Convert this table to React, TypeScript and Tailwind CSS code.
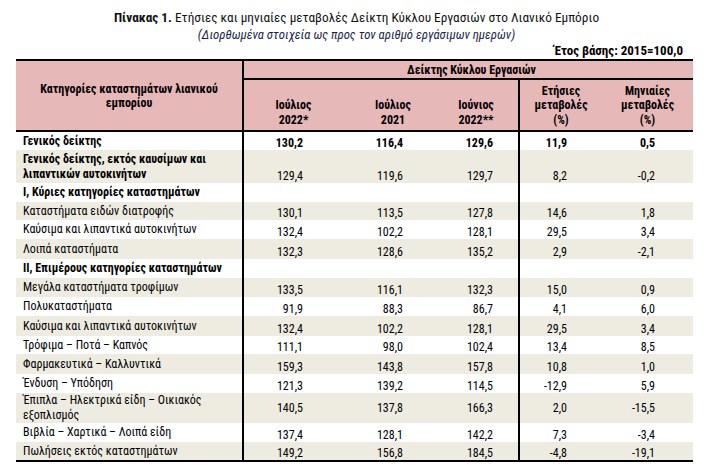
type Row = {
  label: string[];
  nums?: string[];
  bold?: boolean;
  boldNums?: boolean;
  h: string;
  mid?: boolean;
};

const rows: Row[] = [
  { label: ['Γενικός δείκτης'], nums: ['130,2', '116,4', '129,6', '11,9', '0,5'], bold: true, boldNums: true, h: 'h-[18px]' },
  { label: ['Γενικός δείκτης, εκτός καυσίμων και', 'λιπαντικών αυτοκινήτων'], nums: ['129,4', '119,6', '129,7', '8,2', '-0,2'], bold: true, h: 'h-[33px]' },
  { label: ['I, Κύριες κατηγορίες καταστημάτων'], bold: true, h: 'h-[19px]' },
  { label: ['Καταστήματα ειδών διατροφής'], nums: ['130,1', '113,5', '127,8', '14,6', '1,8'], h: 'h-[18px]' },
  { label: ['Καύσιμα και λιπαντικά αυτοκινήτων'], nums: ['132,4', '102,2', '128,1', '29,5', '3,4'], h: 'h-[19px]' },
  { label: ['Λοιπά καταστήματα'], nums: ['132,3', '128,6', '135,2', '2,9', '-2,1'], h: 'h-[20px]' },
  { label: ['II, Επιμέρους κατηγορίες καταστημάτων'], bold: true, h: 'h-[19px]' },
  { label: ['Μεγάλα καταστήματα τροφίμων'], nums: ['133,5', '116,1', '132,3', '15,0', '0,9'], h: 'h-[19px]' },
  { label: ['Πολυκαταστήματα'], nums: ['91,9', '88,3', '86,7', '4,1', '6,0'], h: 'h-[19px]' },
  { label: ['Καύσιμα και λιπαντικά αυτοκινήτων'], nums: ['132,4', '102,2', '128,1', '29,5', '3,4'], h: 'h-[20px]' },
  { label: ['Τρόφιμα – Ποτά – Καπνός'], nums: ['111,1', '98,0', '102,4', '13,4', '8,5'], h: 'h-[18px]' },
  { label: ['Φαρμακευτικά – Καλλυντικά'], nums: ['159,3', '143,8', '157,8', '10,8', '1,0'], h: 'h-[20px]' },
  { label: ['Ένδυση – Υπόδηση'], nums: ['121,3', '139,2', '114,5', '-12,9', '5,9'], h: 'h-[19px]' },
  { label: ['Έπιπλα – Ηλεκτρικά είδη – Οικιακός', 'εξοπλισμός'], nums: ['140,5', '137,8', '166,3', '2,0', '-15,5'], h: 'h-[30px]', mid: true },
  { label: ['Βιβλία – Χαρτικά – Λοιπά είδη'], nums: ['137,4', '128,1', '142,2', '7,3', '-3,4'], h: 'h-[19px]' },
  { label: ['Πωλήσεις εκτός καταστημάτων'], nums: ['149,2', '156,8', '184,5', '-4,8', '-19,1'], h: 'h-[18px]' },
];

function DataRow({ row, shaded }: { row: Row; shaded: boolean }) {
  const n = row.nums ?? ['', '', '', '', ''];
  const align = row.mid ? 'items-center' : 'items-end';
  const numCls = `flex ${align} justify-end leading-[14px] ${row.boldNums ? 'font-bold' : ''}`;
  return (
    <div className={`flex ${row.h} ${shaded ? 'bg-[#eeece1]' : 'bg-white'}`}>
      <div className={`w-[228px] shrink-0 border-r-2 border-black pl-[7px] flex flex-col justify-center leading-[15px] ${row.bold ? 'font-bold' : ''}`}>
        {row.label.map((l) => (
          <span key={l} className="whitespace-nowrap">{l}</span>
        ))}
      </div>
      <div className="w-[276px] shrink-0 border-r-2 border-black flex">
        <div className={`w-[59px] ${numCls}`}>{n[0]}</div>
        <div className={`w-[100px] ${numCls}`}>{n[1]}</div>
        <div className={`w-[90px] ${numCls}`}>{n[2]}</div>
      </div>
      <div className="flex-1 flex">
        <div className={`w-[47px] ${numCls}`}>{n[3]}</div>
        <div className={`w-[88px] ${numCls}`}>{n[4]}</div>
      </div>
    </div>
  );
}

export default function App() {
  return (
    <div
      className="w-[713px] h-[472px] bg-white text-black text-[12px]"
      style={{ fontFamily: '"Roboto Condensed", Roboto, sans-serif' }}
    >
      <div className="pt-[9px] flex flex-col items-center">
        <div className="text-[13.3px] leading-[18px] text-[#111]">
          <span className="font-bold">Πίνακας 1.</span> Ετήσιες και μηνιαίες μεταβολές Δείκτη Κύκλου Εργασιών στο Λιανικό Εμπόριο
        </div>
        <div className="italic text-[12.8px] leading-[15px] text-[#1b1f4a]">
          (Διορθωμένα στοιχεία ως προς τον αριθμό εργάσιμων ημερών)
        </div>
      </div>
      <div className="w-[693px] flex justify-end pr-[10px] font-bold text-[13px] leading-[16px] mt-[1px]">
        Έτος βάσης: 2015=100,0
      </div>

      <div className="ml-[16px] w-[677px]">
        {/* header */}
        <div className="flex bg-[#e6b8b7] border-t-2 border-b-2 border-black font-bold h-[73px]">
          <div className="w-[228px] shrink-0 border-r-2 border-black flex flex-col items-center justify-center leading-[14px]">
            <span>Κατηγορίες καταστημάτων λιανικού</span>
            <span>εμπορίου</span>
          </div>
          <div className="flex-1 flex flex-col">
            <div className="h-[19px] border-b-2 border-black flex items-center justify-center pl-[6px]">
              Δείκτης Κύκλου Εργασιών
            </div>
            <div className="flex-1 flex">
              <div className="w-[276px] shrink-0 border-r-2 border-black flex">
                <div className="w-[99px] flex flex-col items-center">
                  <div className="h-[32px] flex items-end leading-[14px]">Ιούλιος</div>
                  <div className="leading-[16px]">2022*</div>
                </div>
                <div className="w-[100px] flex flex-col items-center">
                  <div className="h-[32px] flex items-end leading-[14px]">Ιούλιος</div>
                  <div className="leading-[16px]">2021</div>
                </div>
                <div className="w-[66px] flex flex-col items-center">
                  <div className="h-[32px] flex items-end leading-[14px]">Ιούνιος</div>
                  <div className="leading-[16px]">2022**</div>
                </div>
              </div>
              <div className="flex-1 flex">
                <div className="w-[82px] flex flex-col items-center">
                  <div className="h-[32px] flex flex-col items-center justify-end leading-[14px]">
                    <span>Ετήσιες</span>
                    <span>μεταβολές</span>
                  </div>
                  <div className="leading-[16px]">(%)</div>
                </div>
                <div className="w-[91px] flex flex-col items-center">
                  <div className="h-[32px] flex flex-col items-center justify-end leading-[14px]">
                    <span>Μηνιαίες</span>
                    <span>μεταβολές</span>
                  </div>
                  <div className="leading-[16px]">(%)</div>
                </div>
              </div>
            </div>
          </div>
        </div>

        {/* body */}
        <div className="border-b-2 border-black">
          {rows.map((r, i) => (
            <DataRow key={i} row={r} shaded={i % 2 === 1} />
          ))}
        </div>
      </div>
    </div>
  );
}
